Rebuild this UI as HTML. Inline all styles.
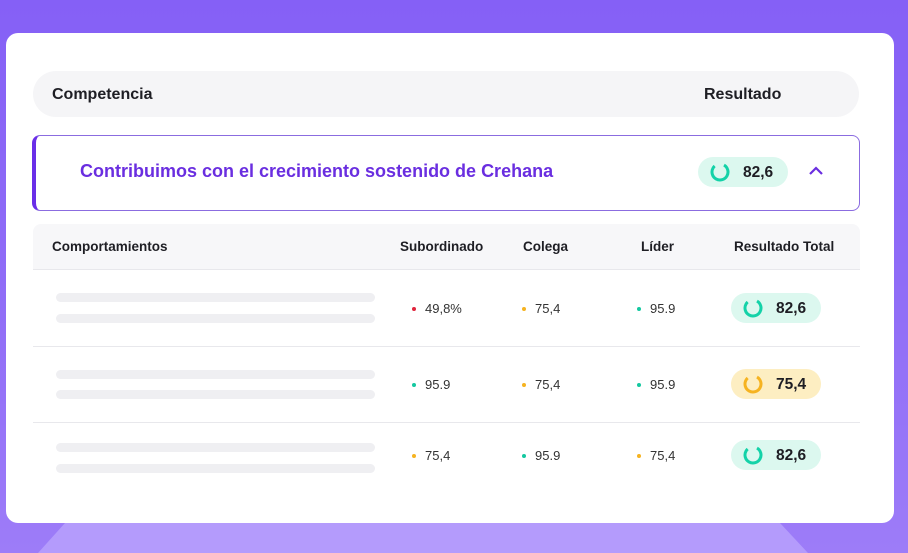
<!DOCTYPE html>
<html><head><style>
*{margin:0;padding:0;box-sizing:border-box}
body{width:908px;height:553px;overflow:hidden;position:relative;background:linear-gradient(180deg,#8560f6 0%,#8f6cf7 50%,#9d7cf8 100%);font-family:"Liberation Sans",sans-serif;color:#1e1e24}
.abs{position:absolute}
.card{left:6px;top:33px;width:888px;height:490px;background:#fff;border-radius:12px}
.b{font-weight:bold}
.skel{position:absolute;left:56px;width:319px;height:9px;border-radius:5px;background:#efeff2}
.sep{position:absolute;left:33px;width:827px;height:1px;background:#e8e8ec}
.v{position:absolute;font-size:13px;color:#333}
.dot{position:absolute;width:4px;height:4px;border-radius:2px}
.badge{position:absolute;width:90px;height:30px;border-radius:15px}
.badge span{position:absolute;left:45px;top:7px;font-size:15.5px;font-weight:bold;color:#1e1e24}
.badge svg{position:absolute;left:12px;top:5px}
.h{font-size:13.5px}
</style></head><body>
<svg class="abs" style="left:0;top:0" width="908" height="553"><polygon points="65,523 780,523 808,553 38,553" fill="#b49bfc"/></svg>
<div class="abs card"></div>
<div class="abs" style="left:33px;top:71px;width:826px;height:46px;border-radius:23px;background:#f5f5f7"></div>
<div class="abs b" style="left:52px;top:86px;font-size:16px">Competencia</div>
<div class="abs b" style="left:704px;top:86px;font-size:16px">Resultado</div>
<div class="abs" style="left:32px;top:135px;width:828px;height:76px;border:1.5px solid #8b6ce0;border-left:4px solid #6a2ee8;border-radius:8px"></div>
<div class="abs b" style="left:80px;top:161px;font-size:18px;color:#6a2ee0">Contribuimos con el crecimiento sostenido de Crehana</div>
<div class="badge" style="left:698px;top:157px;background:#dcf8ef"><svg width="20" height="20" viewBox="0 0 20 20"><circle cx="10" cy="10" r="8" fill="none" stroke="#14d2a8" stroke-width="3" stroke-dasharray="40 10.3" transform="rotate(-60 10 10)"/></svg><span>82,6</span></div>
<svg class="abs" style="left:808px;top:165px" width="16" height="12"><path d="M2 9 L8 3 L14 9" fill="none" stroke="#6a2ee0" stroke-width="2.2"/></svg>
<div class="abs" style="left:33px;top:224px;width:827px;height:45px;background:#f7f7f9;border-radius:8px 8px 0 0"></div>
<div class="sep" style="top:269px"></div>
<div class="abs b h" style="left:52px;top:239px">Comportamientos</div>
<div class="abs b h" style="left:400px;top:239px">Subordinado</div>
<div class="abs b h" style="left:523px;top:239px">Colega</div>
<div class="abs b h" style="left:641px;top:239px">Líder</div>
<div class="abs b h" style="left:734px;top:239px">Resultado Total</div>
<div class="sep" style="top:346px"></div>
<div class="sep" style="top:422px"></div>

<div class="skel" style="top:293px"></div><div class="skel" style="top:314px"></div>
<div class="skel" style="top:370px"></div><div class="skel" style="top:390px"></div>
<div class="skel" style="top:443px"></div><div class="skel" style="top:464px"></div>

<div class="dot" style="left:412px;top:307px;background:#e0243c"></div><div class="v" style="left:425px;top:301px">49,8%</div>
<div class="dot" style="left:522px;top:307px;background:#f6b320"></div><div class="v" style="left:535px;top:301px">75,4</div>
<div class="dot" style="left:637px;top:307px;background:#14c8a0"></div><div class="v" style="left:650px;top:301px">95.9</div>
<div class="badge" style="left:731px;top:293px;background:#dcf8ef"><svg width="20" height="20" viewBox="0 0 20 20"><circle cx="10" cy="10" r="8" fill="none" stroke="#14d2a8" stroke-width="3" stroke-dasharray="40 10.3" transform="rotate(-60 10 10)"/></svg><span>82,6</span></div>

<div class="dot" style="left:412px;top:383px;background:#14c8a0"></div><div class="v" style="left:425px;top:377px">95.9</div>
<div class="dot" style="left:522px;top:383px;background:#f6b320"></div><div class="v" style="left:535px;top:377px">75,4</div>
<div class="dot" style="left:637px;top:383px;background:#14c8a0"></div><div class="v" style="left:650px;top:377px">95.9</div>
<div class="badge" style="left:731px;top:369px;background:#fdeec2"><svg width="20" height="20" viewBox="0 0 20 20"><circle cx="10" cy="10" r="8" fill="none" stroke="#f6b320" stroke-width="3" stroke-dasharray="40 10.3" transform="rotate(-60 10 10)"/></svg><span>75,4</span></div>

<div class="dot" style="left:412px;top:454px;background:#f6b320"></div><div class="v" style="left:425px;top:448px">75,4</div>
<div class="dot" style="left:522px;top:454px;background:#14c8a0"></div><div class="v" style="left:535px;top:448px">95.9</div>
<div class="dot" style="left:637px;top:454px;background:#f6b320"></div><div class="v" style="left:650px;top:448px">75,4</div>
<div class="badge" style="left:731px;top:440px;background:#dcf8ef"><svg width="20" height="20" viewBox="0 0 20 20"><circle cx="10" cy="10" r="8" fill="none" stroke="#14d2a8" stroke-width="3" stroke-dasharray="40 10.3" transform="rotate(-60 10 10)"/></svg><span>82,6</span></div>
</body></html>
